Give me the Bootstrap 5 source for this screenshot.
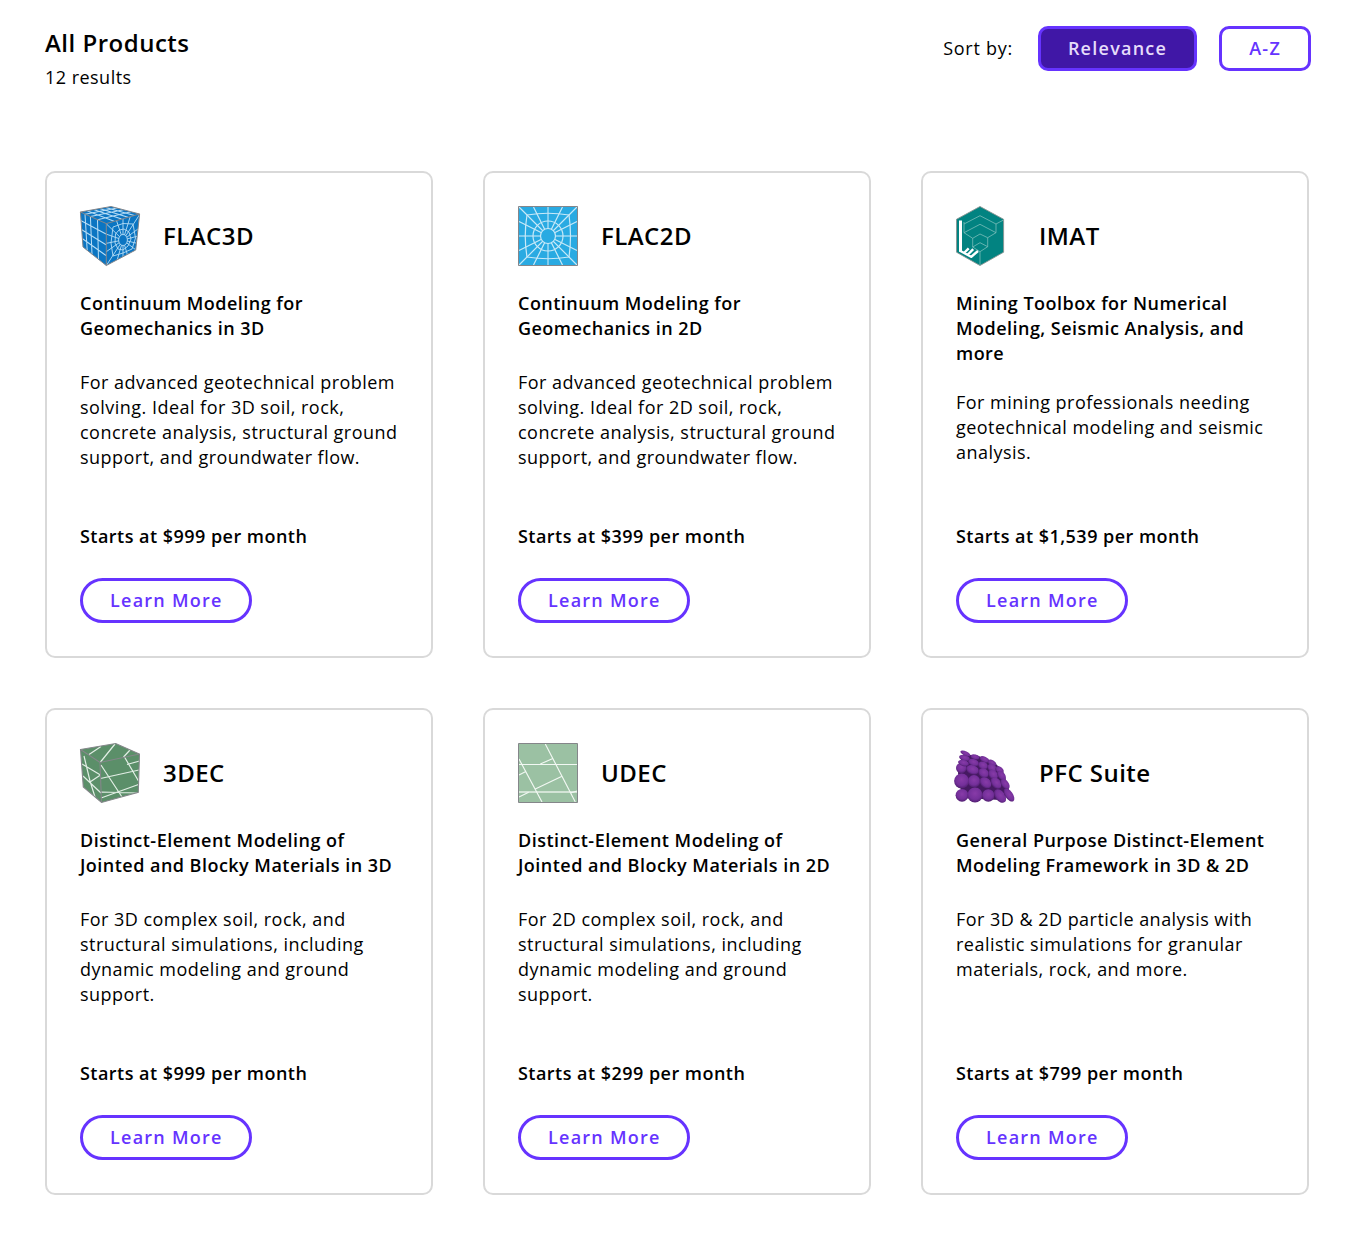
<!DOCTYPE html>
<html lang="en">
<head>
<meta charset="utf-8">
<meta name="viewport" content="width=device-width, initial-scale=1">
<title>All Products</title>
<link href="https://cdn.jsdelivr.net/npm/bootstrap@5.3.0/dist/css/bootstrap.min.css" rel="stylesheet">
<style>
body{font-family:"Open Sans",sans-serif;font-size:18px;line-height:25px;letter-spacing:.47px;color:#000;background:#fff}
.catalog{padding:26px 47px 38px 45px}
.catalog-head{height:145px}
.catalog-title{font-size:24px;line-height:34px;font-weight:600;letter-spacing:.5px;margin:0 0 5px}
.sort-bar{gap:22px}
.sort-label{margin-right:3px;letter-spacing:.72px}
.btn-sort,.btn-more{--bs-btn-color:#6633ff;--bs-btn-border-color:#6633ff;--bs-btn-border-width:3px;--bs-btn-font-weight:600;--bs-btn-font-size:18px;--bs-btn-line-height:25px;--bs-btn-padding-x:27px;--bs-btn-padding-y:7px;--bs-btn-hover-color:#fff;--bs-btn-hover-bg:#4017a6;--bs-btn-hover-border-color:#6633ff;--bs-btn-active-color:#e6dcfa;--bs-btn-active-bg:#4017a6;--bs-btn-active-border-color:#6633ff;height:45px;letter-spacing:1.25px}
.btn-sort{--bs-btn-border-radius:10px}
.btn-more{padding-right:26px}
.product-grid{display:grid;grid-template-columns:repeat(3,388px);gap:50px}
.product{--bs-card-border-width:2px;--bs-card-border-color:#d9d9d9;--bs-card-border-radius:10px;height:487px}
.product .card-body{padding:33px 32px 33px 33px}
.product-head{gap:23px;margin-bottom:25px}
.product-head svg{width:60px;height:60px;overflow:visible;flex:none}
.product-name{font-size:24px;line-height:34px;font-weight:600;letter-spacing:.45px;margin:0}
.product-sub{font-size:18px;line-height:25px;font-weight:600;margin:0 0 24px;min-height:55px}
.product-price{font-weight:600;margin:auto 0 29px}
</style>
<script src="https://cdn.jsdelivr.net/npm/bootstrap@5.3.0/dist/js/bootstrap.bundle.min.js" defer></script>
</head>
<body>
<main class="catalog">
<header class="catalog-head d-flex justify-content-between align-items-start">
<div><h1 class="catalog-title">All Products</h1><p class="mb-0">12 results</p></div>
<div class="sort-bar d-flex align-items-center"><span class="sort-label">Sort by:</span><button class="btn btn-sort active" type="button">Relevance</button><button class="btn btn-sort" type="button">A-Z</button></div>
</header>
<section class="product-grid">

<article class="card product"><div class="card-body d-flex flex-column">
<div class="product-head d-flex align-items-center">
<svg viewBox="0 0 60 60" fill="none" aria-hidden="true">
<defs><clipPath id="face"><path d="M26 17.5 60 8 55.7 44 26 60z"/></clipPath></defs>
<path d="M.4 6 31 .5 59.6 8 55.7 44 26.3 59.5 3 41z" fill="#0b75c2"/>
<g stroke="#b5dcf5" stroke-width="1.05"><path d="M5 8.2 7.2 44.5M10.4 10.6 12 48.5M17.5 13.8 18.5 53.8M.7 14.5 26 28M1.4 23.5 26 38.8M2.2 32.5 26 49.5M7 4.8 34 15.3M13.5 3.6 41.5 13M19.5 2.5 48 11.3M25.5 1.5 54.5 9.5M5 8.2 37 2M10.4 10.6 43.5 3.7M17.5 13.8 51 5.7"/>
<g clip-path="url(#face)" stroke-width=".9"><path d="M43 34 26 17.5M43 34 35 10M43 34 43 8M43 34 51 8M43 34 60 8M43 34 62 20M43 34 62 29M43 34 60 38M43 34 56 44M43 34 49 54M43 34 43 58M43 34 36 58M43 34 26 60M43 34 23 48M43 34 23 38M43 34 23 27"/><path d="M33 21 43 17.5 53 18 55.5 32 52 43 43 47 33 50 31 37zM35.5 28 39 24 44 23 49 26 51 33 48 40 43 44 38 43 35 37z"/></g></g>
<ellipse cx="43" cy="34" rx="4.4" ry="5.5" fill="#0b75c2" stroke="#b5dcf5" stroke-width=".9"/>
<path d="M.4 6 31 .5 59.6 8 55.7 44 26.3 59.5 3 41zL26.3 17.6 59.6 8M26.3 17.6V59.5" stroke="#85868a"/>
</svg><h2 class="product-name">FLAC3D</h2></div>
<h3 class="product-sub">Continuum Modeling for Geomechanics in 3D</h3>
<p class="mb-0">For advanced geotechnical problem solving. Ideal for 3D soil, rock, concrete analysis, structural ground support, and groundwater flow.</p>
<p class="product-price">Starts at $999 per month</p>
<a href="#" class="btn btn-more rounded-pill align-self-start">Learn More</a>
</div></article>

<article class="card product"><div class="card-body d-flex flex-column">
<div class="product-head d-flex align-items-center">
<svg viewBox="0 0 60 60" fill="none" aria-hidden="true">
<path d="M.5.5h59v59H.5z" fill="#29aae2"/>
<g stroke="#c8e9f8" stroke-width="1.2"><path d="M1 1 59 59M59 1 1 59M15.5 1 44.5 59M44.5 1 15.5 59M1 15.5 59 44.5M59 15.5 1 44.5"/><path d="M30 1V59M1 30H59" stroke="#9cd8f2" stroke-width="1.5"/><circle cx="30" cy="30" r="15"/><path d="M9 9Q30 5.5 51 9 54 30 51 51 30 54.500 9 51 5.500 30 9 9z"/></g>
<circle cx="30" cy="30" r="7.500" fill="#29aae2" stroke="#c8e9f8" stroke-width="1.2"/>
<path d="M.5.5h59v59H.5z" stroke="#85868a"/>
</svg><h2 class="product-name">FLAC2D</h2></div>
<h3 class="product-sub">Continuum Modeling for Geomechanics in 2D</h3>
<p class="mb-0">For advanced geotechnical problem solving. Ideal for 2D soil, rock, concrete analysis, structural ground support, and groundwater flow.</p>
<p class="product-price">Starts at $399 per month</p>
<a href="#" class="btn btn-more rounded-pill align-self-start">Learn More</a>
</div></article>

<article class="card product"><div class="card-body d-flex flex-column">
<div class="product-head d-flex align-items-center">
<svg viewBox="0 0 60 60" fill="none" aria-hidden="true">
<path d="M24 .5 47.600 13.300V46.200L24 59.500.500 46.200V13.300z" fill="#028381" stroke="#8b9492" stroke-width=".9"/>
<path d="M8 18 24 9.700 40 18 47.500 14M8 16V26.700L24 18.300 40 26.700V18M8 26.700 16.700 32.300 24 28 31.700 31.700 40 26.700M16.700 32.300V41L24 36.700 31.700 40.700V31.700M16.700 41 24 45.700 31.700 40.700M24 45.700V59" stroke="#83c2bd" stroke-width=".75"/>
<path d="M4.500 14.500V45.500" stroke="#fff" stroke-width="3"/><path d="M3.500 44.500 15.500 51M8.500 46.500 12.700 42.300M12 48.500 17.200 43.200M15 51 22 45" stroke="#fff" stroke-width="2.400"/>
</svg><h2 class="product-name">IMAT</h2></div>
<h3 class="product-sub">Mining Toolbox for Numerical Modeling, Seismic Analysis, and more</h3>
<p class="mb-0">For mining professionals needing geotechnical modeling and seismic analysis.</p>
<p class="product-price">Starts at $1,539 per month</p>
<a href="#" class="btn btn-more rounded-pill align-self-start">Learn More</a>
</div></article>

<article class="card product"><div class="card-body d-flex flex-column">
<div class="product-head d-flex align-items-center">
<svg viewBox="0 0 60 60" fill="none" aria-hidden="true">
<path d="M.500 6.500 35.700.500 59.500 11 58.300 49.300 21.500 59.500 3.300 44z" fill="#5b8f69"/>
<path d="M20.500 19 35 1M9 11.500 21 3.500M43.500 14 50 7M21 22 42 54M44.500 14 58.500 38M20.500 35.500 59 27M47 21.500 59.500 18M21 55 58.500 41.500M21 49 57 50M4 13 10 38 15 54M2 21 20.500 32M3 33 21 50M10 39 20.500 32" stroke="#e2eee5" stroke-width="1.200"/>
<path d="M.500 6.500 35.700.500 59.500 11 58.300 49.300 21.500 59.500 3.300 44zL20 19.500 59.500 11M20 19.500 21.500 59.500" stroke="#85868a" stroke-width="1.100"/>
</svg><h2 class="product-name">3DEC</h2></div>
<h3 class="product-sub">Distinct-Element Modeling of Jointed and Blocky Materials in 3D</h3>
<p class="mb-0">For 3D complex soil, rock, and structural simulations, including dynamic modeling and ground support.</p>
<p class="product-price">Starts at $999 per month</p>
<a href="#" class="btn btn-more rounded-pill align-self-start">Learn More</a>
</div></article>

<article class="card product"><div class="card-body d-flex flex-column">
<div class="product-head d-flex align-items-center">
<svg viewBox="0 0 60 60" fill="none" aria-hidden="true">
<path d="M.500.500h59v59H.500z" fill="#9bc1a3"/>
<path d="M1 49H59" stroke="#d3e4d6" stroke-width="2"/>
<path d="M27.300 1 57.300 59M1 16 24 59M1 21.500H59M22.300 21 34.300 15.700M17.300 46 44 33.300M1 32 8.300 28.300M1 54 10.700 49.300M52.300 50 59 48" stroke="#f2f8f3" stroke-width="1.150"/>
<path d="M.500.500h59v59H.500z" stroke="#85868a"/>
</svg><h2 class="product-name">UDEC</h2></div>
<h3 class="product-sub">Distinct-Element Modeling of Jointed and Blocky Materials in 2D</h3>
<p class="mb-0">For 2D complex soil, rock, and structural simulations, including dynamic modeling and ground support.</p>
<p class="product-price">Starts at $299 per month</p>
<a href="#" class="btn btn-more rounded-pill align-self-start">Learn More</a>
</div></article>

<article class="card product"><div class="card-body d-flex flex-column">
<div class="product-head d-flex align-items-center">
<svg viewBox="0 0 60 60" fill="none" aria-hidden="true">
<defs><radialGradient id="ball" cx=".5" cy=".4" r=".65"><stop offset="0" stop-color="#883ba8"/><stop offset=".6" stop-color="#74309a"/><stop offset="1" stop-color="#481a66"/></radialGradient></defs>
<path d="M6 12 20 12 38 19 47 28 54 50 44 57 6 55 2 30z" fill="#451961"/>
<g fill="url(#ball)">
<ellipse cx="9.500" cy="10.500" rx="5.500" ry="2.200" transform="rotate(25 9.500 10.500)"/><ellipse cx="19" cy="14" rx="4.500" ry="2.500" transform="rotate(15 19 14)"/><ellipse cx="28.500" cy="16.500" rx="5" ry="2.800" transform="rotate(25 28.500 16.500)"/><ellipse cx="36" cy="20" rx="4.500" ry="2.800" transform="rotate(30 36 20)"/>
<ellipse cx="8.500" cy="15" rx="5.500" ry="2.800" transform="rotate(15 8.500 15)"/><ellipse cx="17.500" cy="19.500" rx="5.500" ry="3.500" transform="rotate(20 17.500 19.500)"/><ellipse cx="27" cy="22.500" rx="5" ry="3.800" transform="rotate(25 27 22.500)"/><ellipse cx="36" cy="25" rx="5" ry="3.800" transform="rotate(35 36 25)"/><ellipse cx="43.500" cy="27" rx="4.500" ry="3.200" transform="rotate(40 43.500 27)"/>
<circle cx="5.300" cy="25" r="5.300"/><ellipse cx="7.500" cy="20" rx="5.500" ry="3" transform="rotate(15 7.500 20)"/><ellipse cx="16.500" cy="26.800" rx="6.500" ry="4.600" transform="rotate(20 16.500 26.800)"/><ellipse cx="27.500" cy="30" rx="5.500" ry="4.500" transform="rotate(35 27.500 30)"/><ellipse cx="37" cy="31.500" rx="5.500" ry="4.200" transform="rotate(45 37 31.500)"/><ellipse cx="45.500" cy="32.500" rx="5.500" ry="3.500" transform="rotate(50 45.500 32.500)"/>
<circle cx="18" cy="38.300" r="6.200"/><circle cx="5.600" cy="38" r="7.500"/><ellipse cx="29.500" cy="39.800" rx="6.500" ry="4.800" transform="rotate(40 29.500 39.800)"/><ellipse cx="40" cy="40" rx="6.500" ry="4.500" transform="rotate(50 40 40)"/><ellipse cx="49" cy="41" rx="6" ry="3.600" transform="rotate(52 49 41)"/>
<circle cx="6" cy="52.300" r="6.400"/><circle cx="19" cy="52" r="7.600"/><circle cx="32.300" cy="52.500" r="6.200"/><ellipse cx="44" cy="53" rx="7.700" ry="4.900" transform="rotate(52 44 53)"/><ellipse cx="53" cy="52" rx="7.500" ry="3.900" transform="rotate(55 53 52)"/>
</g>
</svg><h2 class="product-name">PFC Suite</h2></div>
<h3 class="product-sub">General Purpose Distinct-Element Modeling Framework in 3D &amp; 2D</h3>
<p class="mb-0">For 3D &amp; 2D particle analysis with realistic simulations for granular materials, rock, and more.</p>
<p class="product-price">Starts at $799 per month</p>
<a href="#" class="btn btn-more rounded-pill align-self-start">Learn More</a>
</div></article>

</section>
</main>
</body>
</html>
